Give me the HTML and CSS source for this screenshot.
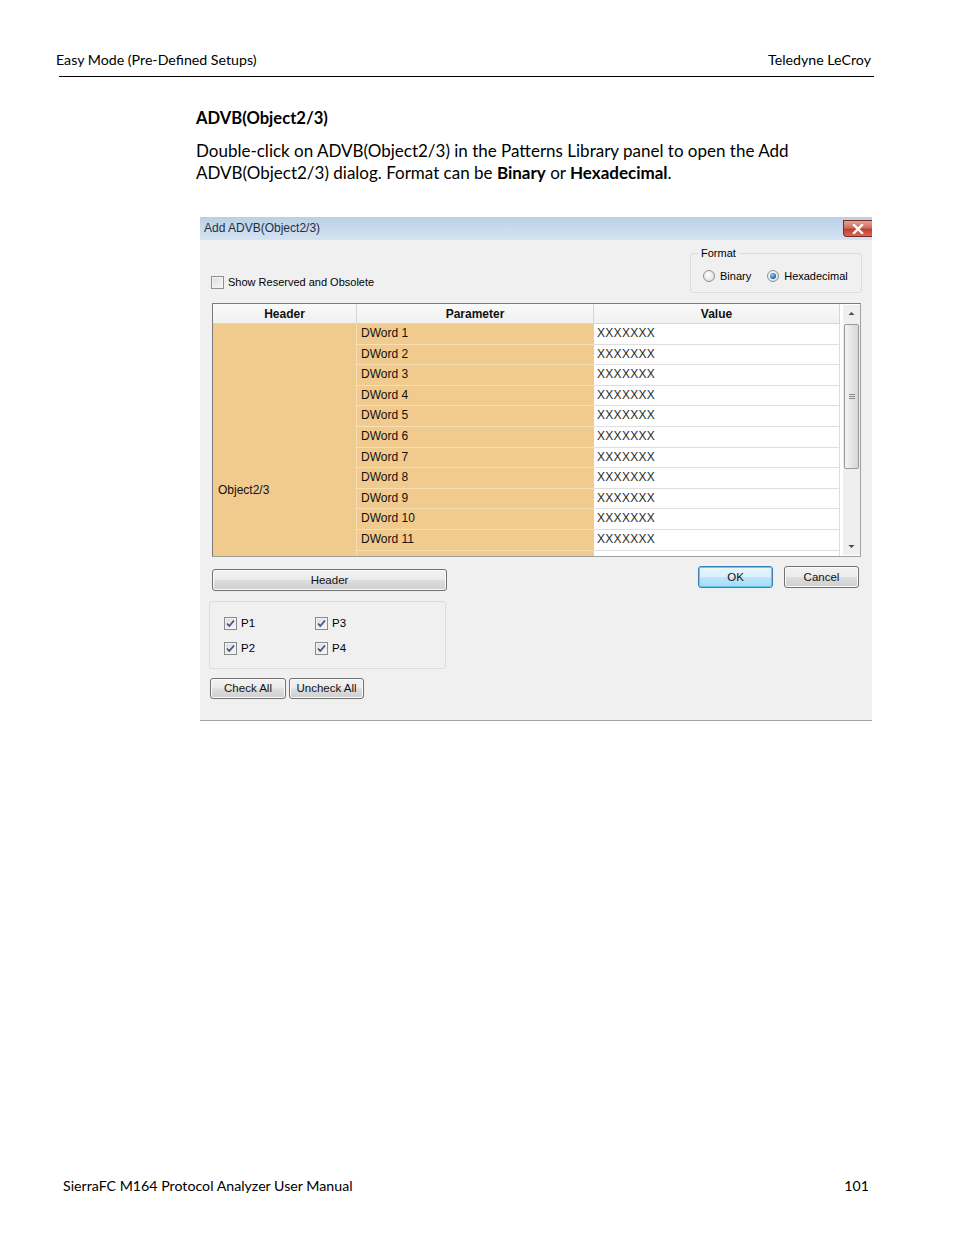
FILE: index.html
```html
<!DOCTYPE html>
<html>
<head>
<meta charset="utf-8">
<title>ADVB(Object2/3)</title>
<link rel="stylesheet" href="styles.css">
</head>
<body>
<div class="page">
  <header class="running-head"><span>Easy Mode (Pre-Defined Setups)</span><span>Teledyne LeCroy</span></header>
  <div class="rule"></div>
  <section class="content">
    <h2>ADVB(Object2/3)</h2>
    <p>Double-click on ADVB(Object2/3) in the Patterns Library panel to open the Add<br>ADVB(Object2/3) dialog. Format can be <b>Binary</b> or <b>Hexadecimal</b>.</p>
  </section>

  <div class="dialog">
    <div class="titlebar">
      <span class="title">Add ADVB(Object2/3)</span>
      <span class="close"><svg width="12" height="10" viewBox="0 0 12 10"><path d="M2 1 L10 9 M10 1 L2 9" stroke="#fff" stroke-width="2.4" stroke-linecap="square"/></svg></span>
    </div>
    <div class="dlg-body">
      <div class="top-row">
        <div class="chk show-reserved"><span class="box"></span><span>Show Reserved and Obsolete</span></div>
        <fieldset class="format">
          <legend>Format</legend>
          <div class="radios">
            <span class="radio"></span><span class="rlabel">Binary</span>
            <span class="radio on"></span><span class="rlabel">Hexadecimal</span>
          </div>
        </fieldset>
      </div>

      <div class="grid-wrap">
        <div class="table">
          <div class="th">Header</div>
          <div class="th">Parameter</div>
          <div class="th">Value</div>
          <div class="hdr-cell">Object2/3</div>
          <div class="pc">DWord 1</div><div class="vc">XXXXXXX</div>
          <div class="pc">DWord 2</div><div class="vc">XXXXXXX</div>
          <div class="pc">DWord 3</div><div class="vc">XXXXXXX</div>
          <div class="pc">DWord 4</div><div class="vc">XXXXXXX</div>
          <div class="pc">DWord 5</div><div class="vc">XXXXXXX</div>
          <div class="pc">DWord 6</div><div class="vc">XXXXXXX</div>
          <div class="pc">DWord 7</div><div class="vc">XXXXXXX</div>
          <div class="pc">DWord 8</div><div class="vc">XXXXXXX</div>
          <div class="pc">DWord 9</div><div class="vc">XXXXXXX</div>
          <div class="pc">DWord 10</div><div class="vc">XXXXXXX</div>
          <div class="pc">DWord 11</div><div class="vc">XXXXXXX</div>
          <div class="pc"></div><div class="vc"></div>
        </div>
        <div class="scrollbar">
          <div class="arrow"><svg width="17" height="17" viewBox="0 0 17 17"><path d="M5.5 10 L8.5 7 L11.5 10 Z" fill="#4a4a4a"/></svg></div>
          <div class="track">
            <div class="thumb"><span class="grip"></span></div>
          </div>
          <div class="arrow"><svg width="17" height="17" viewBox="0 0 17 17"><path d="M5.5 7 L8.5 10 L11.5 7 Z" fill="#4a4a4a"/></svg></div>
        </div>
      </div>

      <div class="btn-row">
        <div class="btn header-btn">Header</div>
        <div class="ok-cancel">
          <div class="btn ok">OK</div>
          <div class="btn cancel">Cancel</div>
        </div>
      </div>

      <div class="ports">
        <div class="chk port"><span class="box checked"><svg width="11" height="11" viewBox="0 0 11 11"><path d="M2 5.5 L4.3 8 L9 2.5" fill="none" stroke="#3b4f8c" stroke-width="1.7"/></svg></span><span>P1</span></div>
        <div class="chk port"><span class="box checked"><svg width="11" height="11" viewBox="0 0 11 11"><path d="M2 5.5 L4.3 8 L9 2.5" fill="none" stroke="#3b4f8c" stroke-width="1.7"/></svg></span><span>P3</span></div>
        <div class="chk port"><span class="box checked"><svg width="11" height="11" viewBox="0 0 11 11"><path d="M2 5.5 L4.3 8 L9 2.5" fill="none" stroke="#3b4f8c" stroke-width="1.7"/></svg></span><span>P2</span></div>
        <div class="chk port"><span class="box checked"><svg width="11" height="11" viewBox="0 0 11 11"><path d="M2 5.5 L4.3 8 L9 2.5" fill="none" stroke="#3b4f8c" stroke-width="1.7"/></svg></span><span>P4</span></div>
      </div>

      <div class="check-btns">
        <div class="btn check-all">Check All</div>
        <div class="btn uncheck-all">Uncheck All</div>
      </div>
    </div>
  </div>

  <footer class="running-foot"><span>SierraFC M164 Protocol Analyzer User Manual</span><span>101</span></footer>
</div>
</body>
</html>
```

FILE: styles.css
```css
html, body {
  margin: 0;
  padding: 0;
  background: #fff;
}

.page {
  width: 954px;
  min-height: 1235px;
  display: flex;
  flex-direction: column;
  font-family: Lato, "Liberation Sans", sans-serif;
  color: #000;
}

.running-head {
  display: flex;
  justify-content: space-between;
  padding: 51px 83px 0 56px;
  font-size: 14.2px;
  line-height: 18px;
}

.rule {
  margin: 7px 0 0 59px;
  width: 815px;
  height: 1px;
  background: #000;
}

.content {
  margin-left: 196px;
}

.content h2 {
  margin: 31px 0 0;
  font-size: 16.6px;
  line-height: 20px;
  font-weight: 700;
}

.content p {
  margin: 12px 0 0;
  font-size: 17px;
  line-height: 22px;
}

/* ---------- dialog ---------- */

.dialog {
  margin: 33px 0 0 200px;
  width: 672px;
  height: 504px;
  display: flex;
  flex-direction: column;
  font-family: "Liberation Sans", Arial, sans-serif;
  font-size: 11px;
  color: #000;
  overflow: hidden;
}

.titlebar {
  height: 23px;
  flex: none;
  display: flex;
  justify-content: space-between;
  align-items: flex-start;
  background: linear-gradient(#bacfe7, #cadbee 55%, #d4e2f1);
  padding-left: 4px;
}

.title {
  font-size: 12px;
  line-height: 23px;
  color: #1d2f47;
}

.close {
  margin-top: 3px;
  width: 29px;
  height: 17px;
  border: 1px solid #7c2b22;
  border-right: none;
  border-radius: 0 0 0 4px;
  background: linear-gradient(#e3a293, #d0705f 45%, #c0402f 55%, #d46a55);
  display: flex;
  align-items: center;
  justify-content: center;
  box-sizing: border-box;
}

.dlg-body {
  flex: 1;
  background: #f0f0f0;
  border-bottom: 1px solid #a3a3a3;
  padding: 0 11px 0 9px;
  display: flex;
  flex-direction: column;
}

.top-row {
  height: 63px;
  display: flex;
  justify-content: space-between;
  align-items: flex-start;
}

.chk {
  display: flex;
  align-items: center;
  line-height: 13px;
}

.box {
  width: 13px;
  height: 13px;
  box-sizing: border-box;
  border: 1px solid #8e8f8f;
  background: linear-gradient(135deg, #dcdcdc, #f7f7f7);
  box-shadow: inset 0 0 0 1px #f4f4f4;
  margin-right: 4px;
  display: flex;
  align-items: center;
  justify-content: center;
  flex: none;
}

.show-reserved {
  margin: 36px 0 0 2px;
}

.format {
  margin: 7px -1px 0 0;
  width: 172px;
  height: 46px;
  box-sizing: border-box;
  padding: 0 0 0 12px;
  border: 1px solid #dcdcdc;
  border-radius: 3px;
}

.format legend {
  padding: 0 3px;
  margin-left: -5px;
  font-size: 11px;
  line-height: 12px;
}

.radios {
  display: flex;
  align-items: center;
  margin-top: 11px;
}

.radio {
  width: 12px;
  height: 12px;
  box-sizing: border-box;
  border-radius: 50%;
  border: 1px solid #8f8f8f;
  background: radial-gradient(circle at 40% 35%, #ffffff, #d8d8d8);
  display: flex;
  align-items: center;
  justify-content: center;
  margin-right: 5px;
}

.radio.on::after {
  content: "";
  width: 6px;
  height: 6px;
  border-radius: 50%;
  background: radial-gradient(circle at 40% 35%, #8dd0ff, #1b5fa8 70%);
}

.rlabel + .radio {
  margin-left: 16px;
}

/* ---------- grid ---------- */

.grid-wrap {
  margin-left: 3px;
  width: 649px;
  height: 254px;
  box-sizing: border-box;
  border: 1px solid #a0a0a0;
  border-top-color: #7a7a7a;
  border-left-color: #7a7a7a;
  background: #fff;
  display: flex;
  gap: 3px;
  overflow: hidden;
}

.table {
  width: 627px;
  height: 252px;
  overflow: hidden;
  display: grid;
  grid-template-columns: 144px 237px 246px;
  grid-template-rows: 20px;
  grid-auto-rows: 20.6px;
  align-content: start;
}

.th {
  box-sizing: border-box;
  background: linear-gradient(#fafafa, #f0f0f0);
  border-right: 1px solid #d5d5d5;
  border-bottom: 1px solid #d5d5d5;
  text-align: center;
  font-weight: 700;
  font-size: 12px;
  line-height: 20px;
  color: #111;
}

.hdr-cell {
  grid-column: 1;
  grid-row: 2 / span 12;
  background: #f1cb8e;
  border-right: 1px solid #f6ddb3;
  padding: 159px 0 0 5px;
  font-size: 12px;
  line-height: 14px;
  color: #111;
}

.pc {
  box-sizing: border-box;
  background: #f1cb8e;
  border-bottom: 1px solid #f7dfb6;
  padding-left: 4px;
  font-size: 12px;
  line-height: 19px;
  color: #111;
}

.vc {
  box-sizing: border-box;
  background: #fff;
  border-bottom: 1px solid #dedede;
  border-right: 1px solid #dedede;
  padding-left: 3px;
  font-size: 12px;
  line-height: 19px;
  letter-spacing: 0.3px;
  color: #2b2b2b;
}

.scrollbar {
  width: 17px;
  height: 250px;
  margin-top: 1px;
  background: #efefef;
  display: flex;
  flex-direction: column;
  flex: none;
}

.arrow {
  height: 17px;
  flex: none;
}

.track {
  flex: 1;
  padding-top: 2px;
}

.thumb {
  width: 15px;
  height: 145px;
  margin-left: 1px;
  box-sizing: border-box;
  border: 1px solid #989898;
  border-radius: 2px;
  background: linear-gradient(90deg, #f4f4f4, #e6e6e6 50%, #d6d6d6);
  display: flex;
  align-items: center;
  justify-content: center;
}

.grip {
  width: 6px;
  height: 5px;
  background: repeating-linear-gradient(#8a8a8a 0 1px, transparent 1px 2px);
}

/* ---------- buttons ---------- */

.btn {
  box-sizing: border-box;
  border: 1px solid #707070;
  border-radius: 3px;
  background: linear-gradient(#f2f2f2, #ebebeb 48%, #dddddd 52%, #cfcfcf);
  box-shadow: inset 0 0 0 1px #fbfbfb;
  text-align: center;
  color: #111;
  font-size: 11.5px;
}

.btn-row {
  display: flex;
  justify-content: space-between;
  align-items: flex-start;
}

.header-btn {
  margin: 12px 0 0 3px;
  width: 235px;
  height: 22px;
  line-height: 20px;
}

.ok-cancel {
  display: flex;
  gap: 11px;
  margin: 9px 2px 0 0;
}

.ok, .cancel {
  width: 75px;
  height: 22px;
  line-height: 20px;
}

.ok {
  border-color: #3c7fb1;
  background: linear-gradient(#eaf6fd, #d9f0fc 48%, #bee6fd 52%, #a7d9f5);
  box-shadow: inset 0 0 0 1px #61cbf3;
}

.ports {
  margin-top: 10px;
  width: 237px;
  height: 68px;
  box-sizing: border-box;
  border: 1px solid #dcdcdc;
  border-radius: 3px;
  padding: 15px 0 0 14px;
  display: grid;
  grid-template-columns: 91px 91px;
  grid-auto-rows: 25px;
  align-content: start;
}

.port {
  align-items: flex-start;
  font-size: 11.5px;
}

.port .box {
  border-color: #8a8a8a;
}

.check-btns {
  margin: 9px 0 0 1px;
  display: flex;
  gap: 3px;
}

.check-all {
  width: 76px;
  height: 21px;
  line-height: 19px;
}

.uncheck-all {
  width: 75px;
  height: 21px;
  line-height: 19px;
}

/* ---------- footer ---------- */

.running-foot {
  margin-top: auto;
  display: flex;
  justify-content: space-between;
  padding: 0 85px 40px 63px;
  font-size: 14.2px;
  line-height: 18px;
}
```
